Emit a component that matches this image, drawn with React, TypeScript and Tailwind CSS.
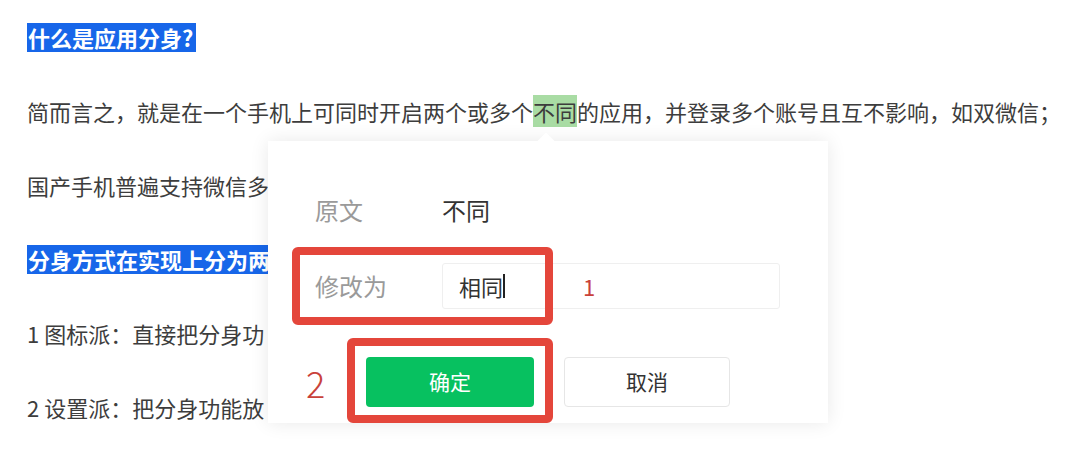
import React from "react";

const cjk = { fontFamily: '"Noto Sans CJK SC", "Noto Sans", sans-serif' };

function Line({ children }: { children: React.ReactNode }) {
  return <div className="flex h-[74px] items-center">{children}</div>;
}

function Heading({ children }: { children: React.ReactNode }) {
  return (
    <span className="bg-[#1766e9] pl-[1px] pr-[3px] text-[22px] font-bold leading-[29px] text-white">
      {children}
    </span>
  );
}

function EditPopup() {
  return (
    <div className="absolute left-[268px] top-[141px] h-[282px] w-[560px] bg-white shadow-[0_0_18px_rgba(0,0,0,0.09)]">
      {/* little caret pointing at the selected word */}
      <div className="absolute left-[272px] top-[-6px] h-3 w-3 rotate-45 bg-white" />

      <div className="flex flex-col">
        <div className="mt-[52px] flex h-[34px] items-center pl-[47px]">
          <span className="w-[127px] text-[24px] text-[#9a9a9a]">原文</span>
          <span className="text-[24px] text-[#333]">不同</span>
        </div>

        <div className="mt-[36px] flex h-[46px] items-center pl-[47px]">
          <span className="w-[127px] text-[24px] text-[#9a9a9a]">修改为</span>
          <div className="flex h-[46px] w-[338px] items-center rounded-[3px] border border-[#efefef] pl-[16px]">
            <span className="text-[22px] text-[#333]">相同</span>
            <span className="h-[24px] w-[2px] bg-[#222]" />
            <span className="ml-[78px] text-[22px] text-[#c9423a]">1</span>
          </div>
        </div>

        <div className="mt-[48px] flex h-[50px] items-center pl-[38px]">
          <span className="w-[60px] text-[36px] font-light leading-none text-[#c9423a]">2</span>
          <button className="flex h-[50px] w-[168px] items-center justify-center rounded-[4px] bg-[#07c160] text-[21px] text-white">
            确定
          </button>
          <button className="ml-[30px] flex h-[50px] w-[166px] items-center justify-center rounded-[4px] border border-[#e6e6e6] bg-white text-[21px] text-[#333]">
            取消
          </button>
        </div>
      </div>

      {/* red annotation frames */}
      <div className="absolute left-[24px] top-[106px] h-[78px] w-[261px] rounded-[6px] border-[8px] border-[#e4463b]" />
      <div className="absolute left-[79px] top-[197px] h-[85px] w-[206px] rounded-[6px] border-[8px] border-[#e4463b]" />
    </div>
  );
}

export default function App() {
  return (
    <div className="relative h-[449px] w-[1080px] overflow-hidden bg-white" style={cjk}>
      <div className="flex flex-col pl-[27px] text-[22px] text-[#3d3d3d]">
        <Line>
          <Heading>什么是应用分身?</Heading>
        </Line>
        <Line>
          <span className="whitespace-nowrap">
            简而言之，就是在一个手机上可同时开启两个或多个
            <span className="bg-[#a9dca4]">不同</span>
            的应用，并登录多个账号且互不影响，如双微信；
          </span>
        </Line>
        <Line>
          <span className="whitespace-nowrap">国产手机普遍支持微信多</span>
        </Line>
        <Line>
          <Heading>分身方式在实现上分为两</Heading>
        </Line>
        <Line>
          <span className="whitespace-nowrap">1 图标派：直接把分身功</span>
        </Line>
        <Line>
          <span className="whitespace-nowrap">2 设置派：把分身功能放</span>
        </Line>
      </div>
      <EditPopup />
    </div>
  );
}
